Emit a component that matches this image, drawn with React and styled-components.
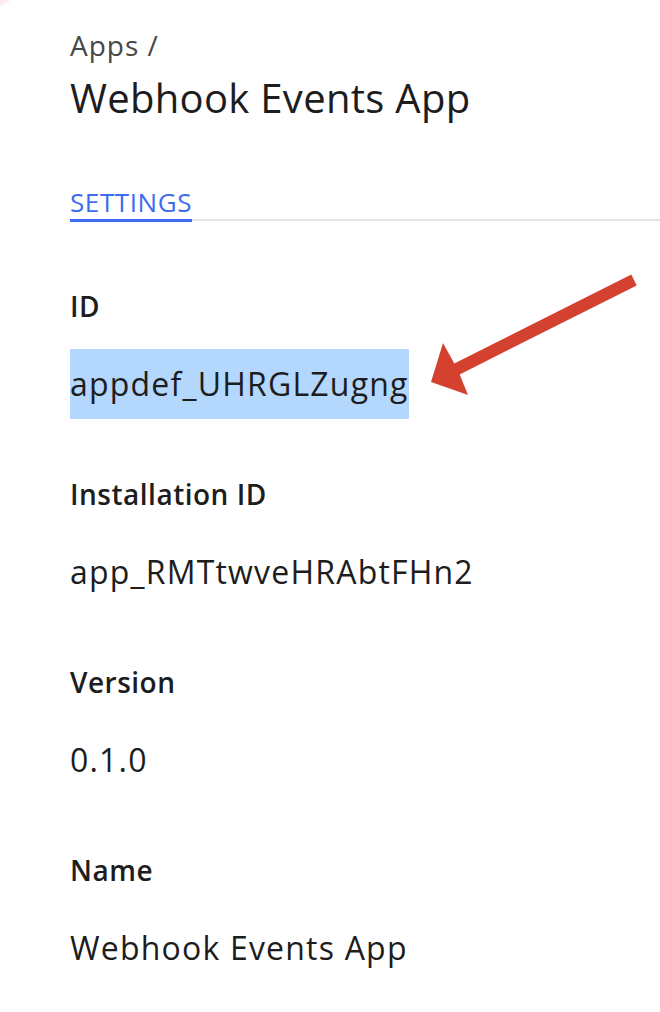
import React from 'react';
import styled, { createGlobalStyle } from 'styled-components';

const fields = [
  { label: 'ID', value: 'appdef_UHRGLZugng', selected: true },
  { label: 'Installation ID', value: 'app_RMTtwveHRAbtFHn2' },
  { label: 'Version', value: '0.1.0' },
  { label: 'Name', value: 'Webhook Events App' },
];

const App = () => {
  return (
    <Page>
      <GlobalStyle />
      <Corner />
      <Header>
        <Breadcrumb>Apps /</Breadcrumb>
        <Title>Webhook Events App</Title>
      </Header>
      <TabBar>
        <Tab active>SETTINGS</Tab>
      </TabBar>
      <Fields>
        {fields.map((f) => (
          <Field key={f.label}>
            <Label>{f.label}</Label>
            <Value selected={f.selected}>{f.value}</Value>
          </Field>
        ))}
      </Fields>
      <Arrow viewBox="0 0 660 1012" width="660" height="1012">
        <path
          d="M431 382 L443 343 L454.3 363.6 L631.3 274.6 L636.7 285.4 L459.7 374.4 L468 395 Z"
          fill="#d4412f"
        />
      </Arrow>
    </Page>
  );
};

//Styling
const GlobalStyle = createGlobalStyle`
  body {
    margin: 0;
    background: #fff;
    font-family: "Open Sans", "Liberation Sans", sans-serif;
    color: #1d1d20;
  }
`;

const Page = styled.div`
  position: relative;
  width: 660px;
  min-height: 1012px;
  padding: 30px 0 0 70px;
  box-sizing: border-box;
  overflow: hidden;
`;

const Corner = styled.div`
  position: absolute;
  left: -40px;
  top: -52px;
  width: 60px;
  height: 60px;
  border-radius: 50%;
  background: #fdecee;
`;

const Header = styled.div`
  display: flex;
  flex-direction: column;
`;

const Breadcrumb = styled.div`
  font-size: 28px;
  line-height: 30px;
  letter-spacing: 1px;
  color: #474747;
`;

const Title = styled.h1`
  margin: 13px 0 0;
  font-size: 40px;
  line-height: 50px;
  font-weight: 400;
  letter-spacing: 0.3px;
  color: #1d1d20;
`;

const TabBar = styled.div`
  display: flex;
  margin-top: 64px;
  border-bottom: 2px solid #e4e4e4;
`;

const Tab = styled.div`
  font-size: 26px;
  line-height: 30px;
  letter-spacing: 0.6px;
  padding-bottom: 2px;
  margin-bottom: -3px;
  color: ${(p) => (p.active ? '#3d6cf2' : '#555')};
  border-bottom: 3px solid ${(p) => (p.active ? '#3d6cf2' : 'transparent')};
`;

const Fields = styled.div`
  display: flex;
  flex-direction: column;
  gap: 60px;
  margin-top: 70px;
`;

const Field = styled.div`
  display: flex;
  flex-direction: column;
  align-items: flex-start;
  gap: 28px;
`;

const Label = styled.div`
  font-size: 28px;
  line-height: 30px;
  font-weight: 600;
  letter-spacing: 0.5px;
  color: #1d1d20;
`;

const Value = styled.div`
  font-size: 32px;
  line-height: 70px;
  height: 70px;
  letter-spacing: 1.2px;
  color: #1d1d20;
  background: ${(p) => (p.selected ? '#b4d7fe' : 'transparent')};
`;

const Arrow = styled.svg`
  position: absolute;
  left: 0;
  top: 0;
  pointer-events: none;
`;

export default App;
